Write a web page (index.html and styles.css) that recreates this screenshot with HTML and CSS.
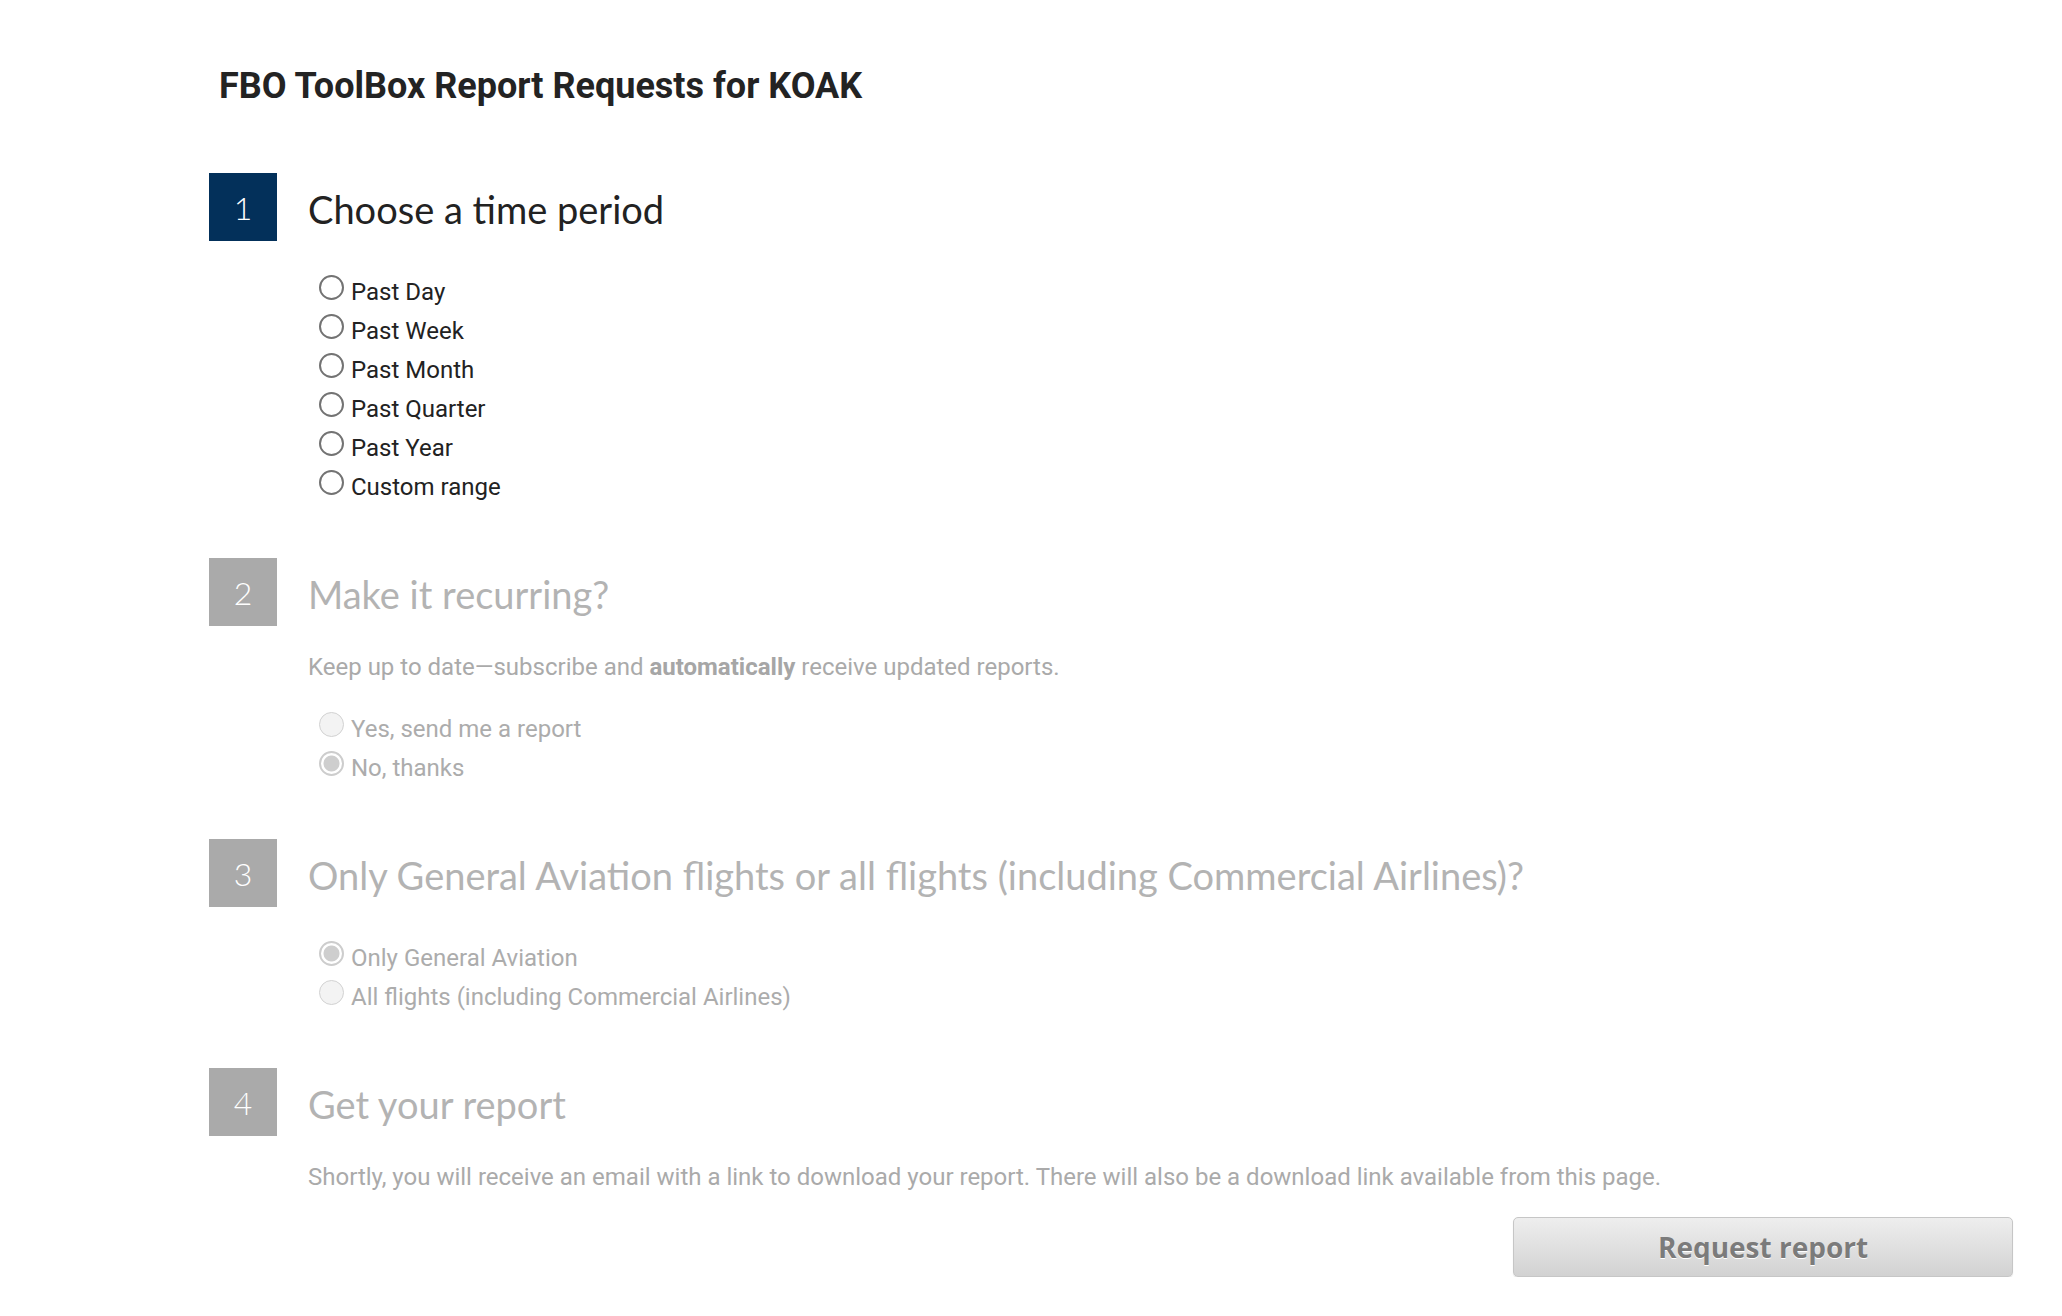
FILE: index.html
```html
<!DOCTYPE html>
<html lang="en">
<head>
<meta charset="utf-8">
<title>FBO ToolBox Report Requests for KOAK</title>
<link rel="stylesheet" href="styles.css">
</head>
<body>
<main class="page">
  <h1 class="page-title">FBO ToolBox Report Requests for KOAK</h1>

  <section class="step step-active">
    <div class="step-head">
      <span class="step-num">1</span>
      <h2 class="step-title">Choose a time period</h2>
    </div>
    <div class="options options-after-head">
      <label class="option"><input type="radio" name="period" class="radio">Past Day</label>
      <label class="option"><input type="radio" name="period" class="radio">Past Week</label>
      <label class="option"><input type="radio" name="period" class="radio">Past Month</label>
      <label class="option"><input type="radio" name="period" class="radio">Past Quarter</label>
      <label class="option"><input type="radio" name="period" class="radio">Past Year</label>
      <label class="option"><input type="radio" name="period" class="radio">Custom range</label>
    </div>
  </section>

  <section class="step step-disabled">
    <div class="step-head">
      <span class="step-num">2</span>
      <h2 class="step-title">Make it recurring?</h2>
    </div>
    <p class="step-desc">Keep up to date—subscribe and <strong>automatically</strong> receive updated reports.</p>
    <div class="options options-after-desc">
      <label class="option"><input type="radio" name="recurring" class="radio" disabled>Yes, send me a report</label>
      <label class="option"><input type="radio" name="recurring" class="radio" disabled checked>No, thanks</label>
    </div>
  </section>

  <section class="step step-disabled">
    <div class="step-head">
      <span class="step-num">3</span>
      <h2 class="step-title">Only General Aviation flights or all flights (including Commercial Airlines)?</h2>
    </div>
    <div class="options options-after-head">
      <label class="option"><input type="radio" name="flights" class="radio" disabled checked>Only General Aviation</label>
      <label class="option"><input type="radio" name="flights" class="radio" disabled>All flights (including Commercial Airlines)</label>
    </div>
  </section>

  <section class="step step-disabled">
    <div class="step-head">
      <span class="step-num">4</span>
      <h2 class="step-title">Get your report</h2>
    </div>
    <p class="step-desc">Shortly, you will receive an email with a link to download your report. There will also be a download link available from this page.</p>
    <div class="actions">
      <button type="button" class="btn-request" disabled>Request report</button>
    </div>
  </section>
</main>
</body>
</html>
```

FILE: styles.css
```css
html, body {
  margin: 0;
  padding: 0;
  background: #ffffff;
}

body {
  font-family: Roboto, "Liberation Sans", sans-serif;
  color: #222222;
}

.page {
  padding: 64px 48px 0 209px;
}

.page-title {
  margin: 0 0 65px 10px;
  font: 700 36px/44px Roboto, "Liberation Sans", sans-serif;
  color: #232323;
}

.step + .step {
  margin-top: 51px;
}

.step-head {
  display: flex;
  align-items: flex-start;
  height: 68px;
}

.step-num {
  flex: none;
  width: 68px;
  height: 68px;
  display: flex;
  align-items: center;
  justify-content: center;
  background: #03305a;
  color: #ffffff;
  font: 300 32px Lato, "Open Sans", sans-serif;
}

.step-title {
  margin: 5px 0 0 31px;
  font: 400 38px/62px Lato, "Open Sans", sans-serif;
  color: #222222;
  white-space: nowrap;
}

.step-disabled .step-num {
  background: #aaaaaa;
}

.step-disabled .step-title {
  color: #b3b3b3;
}

.step-desc {
  margin: 22px 0 0 0;
  padding-left: 99px;
  font: 400 24px/39px Roboto, "Liberation Sans", sans-serif;
  color: #aaaaaa;
}

.step-desc strong {
  font-weight: 700;
  color: #a6a6a6;
}

.options {
  padding-left: 110px;
}

.options-after-head {
  margin-top: 32px;
}

.options-after-desc {
  margin-top: 23px;
}

.option {
  display: block;
  font: 400 24px/39px Roboto, "Liberation Sans", sans-serif;
  color: #222222;
}

.step-disabled .option {
  color: #acacac;
}

.radio {
  -webkit-appearance: none;
  appearance: none;
  display: inline-block;
  box-sizing: border-box;
  width: 25px;
  height: 25px;
  margin: 0 7px 0 0;
  padding: 0;
  border: 2px solid #737373;
  border-radius: 50%;
  background: #ffffff;
  vertical-align: baseline;
}

.radio:disabled {
  border: 1.5px solid #d2d2d2;
  background: #f3f3f3;
}

.radio:disabled:checked {
  border: 2px solid #cdcdcd;
  background: radial-gradient(circle closest-side, #cecece 0, #cecece 72%, #ffffff 80%, #ffffff 100%);
}

.actions {
  display: flex;
  justify-content: flex-end;
  margin-top: 20px;
}

.btn-request {
  box-sizing: border-box;
  width: 500px;
  height: 60px;
  margin: 0 1px 0 0;
  padding: 0;
  border: 1px solid #c6c6c6;
  border-radius: 5px;
  background: linear-gradient(#eeeeee, #d2d2d2);
  box-shadow: 0 1px 1px rgba(0, 0, 0, 0.12);
  font: 700 28px "Open Sans", Roboto, sans-serif;
  color: #7b7b7b;
  text-shadow: 0 1px 0 #ffffff;
  cursor: default;
}
```
